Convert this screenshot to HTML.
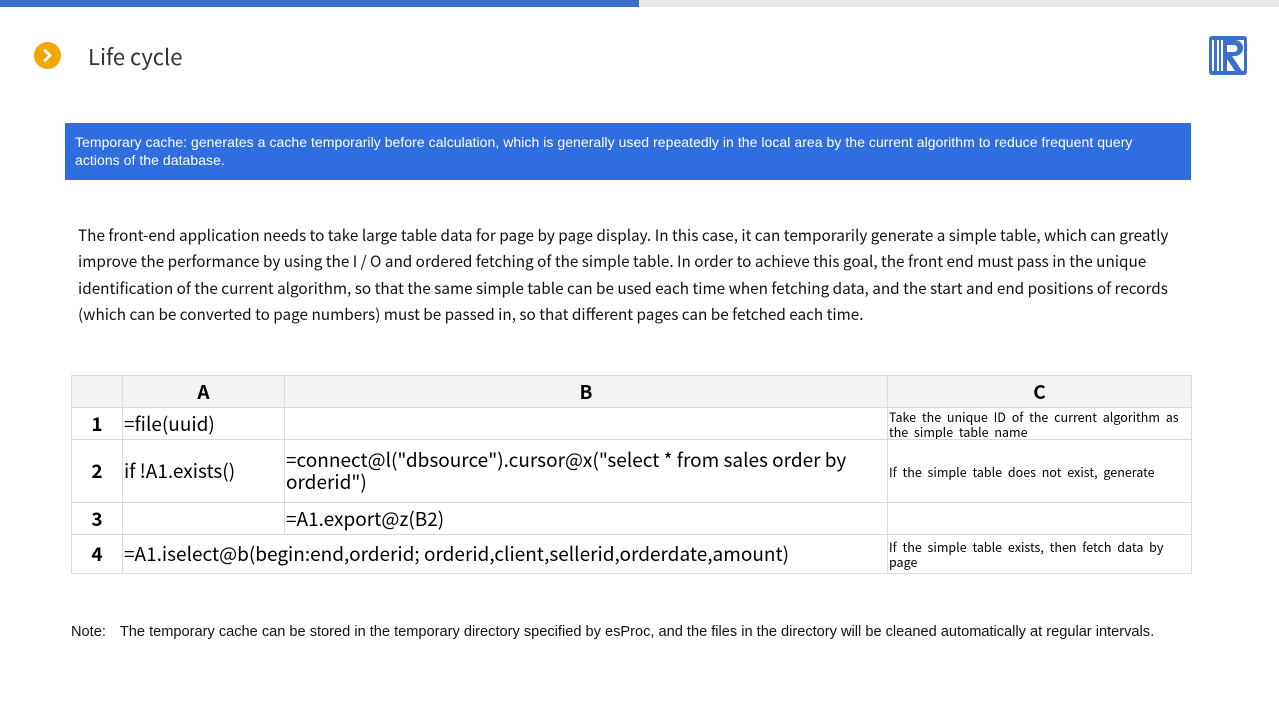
<!DOCTYPE html>
<html><head><meta charset="utf-8"><style>
*{margin:0;padding:0;box-sizing:border-box}
body{width:1279px;height:720px;background:#fff;position:relative;overflow:hidden;font-family:"Liberation Sans","Noto Sans CJK SC",sans-serif;}
.abs{position:absolute}
table{border-collapse:collapse;position:absolute;left:71px;top:375px;table-layout:fixed;width:1120px}
td{border:1px solid #d9d9d9;color:#000;font-family:"Noto Sans CJK SC","Liberation Sans",sans-serif;font-size:19px;line-height:22px;padding:0 1px;vertical-align:middle;overflow:hidden}
td.h{background:#f2f2f2;text-align:center;font-weight:bold;font-size:19px}
td.c{font-size:12.5px;line-height:15px;word-spacing:3px}
</style></head><body>
<div class="abs" style="left:0;top:0;width:639px;height:7px;background:#3b6fce"></div>
<div class="abs" style="left:639px;top:0;width:640px;height:7px;background:#e8e8e8"></div>
<div class="abs" style="left:34px;top:42px;width:27px;height:27px;border-radius:50%;background:#f0a800"></div>
<svg class="abs" style="left:34px;top:42px" width="27" height="27"><path d="M11 8.5 L16 13.5 L11 18.5" stroke="#fff" stroke-width="3" fill="none" stroke-linecap="round" stroke-linejoin="round"/></svg>
<div class="abs" style="left:88px;top:42px;font-size:22px;color:#333;font-family:'Noto Sans CJK SC','Liberation Sans',sans-serif;line-height:28px">Life cycle</div>
<svg class="abs" style="left:1208px;top:35px" width="40" height="41" viewBox="0 0 40 41">
<rect x="1" y="1" width="38" height="39" rx="3" fill="#3b6fce"/>
<rect x="4" y="5" width="32" height="31" fill="#fff"/>
<rect x="6" y="5" width="3" height="31" fill="#3b6fce"/>
<rect x="11" y="5" width="2" height="31" fill="#3b6fce"/>
<path d="M15 5 H27 A8 8 0 0 1 27 21 H24 L34 36 H27 L19 24 V36 H15 Z M19 10 V17 H26 A3.5 3.5 0 0 0 26 10 Z" fill="#3b6fce"/>
</svg>
<div class="abs" style="left:65px;top:123px;width:1126px;height:57px;background:#2f6ee0;color:#fff;font-size:14px;line-height:18px;padding:10px 10px;letter-spacing:0.05px">Temporary cache: generates a cache temporarily before calculation, which is generally used repeatedly in the local area by the current algorithm to reduce frequent query actions of the database.</div>
<div class="abs" style="left:78px;top:222px;width:1110px;font-size:15.3px;line-height:26.3px;color:#111;font-family:'Noto Sans CJK SC','Liberation Sans',sans-serif">The front-end application needs to take large table data for page by page display. In this case, it can temporarily generate a simple table, which can greatly improve the performance by using the I / O and ordered fetching of the simple table. In order to achieve this goal, the front end must pass in the unique identification of the current algorithm, so that the same simple table can be used each time when fetching data, and the start and end positions of records (which can be converted to page numbers) must be passed in, so that different pages can be fetched each time.</div>
<table>
<colgroup><col style="width:51px"><col style="width:162px"><col style="width:603px"><col style="width:304px"></colgroup>
<tr style="height:32px"><td class="h"></td><td class="h">A</td><td class="h">B</td><td class="h">C</td></tr>
<tr style="height:32px"><td class="h" style="background:#fff">1</td><td>=file(uuid)</td><td></td><td class="c">Take the unique ID of the current algorithm as the simple table name</td></tr>
<tr style="height:63px"><td class="h" style="background:#fff">2</td><td>if !A1.exists()</td><td>=connect@l("dbsource").cursor@x("select * from sales order by orderid")</td><td class="c">If the simple table does not exist, generate</td></tr>
<tr style="height:32px"><td class="h" style="background:#fff">3</td><td></td><td>=A1.export@z(B2)</td><td></td></tr>
<tr style="height:39px"><td class="h" style="background:#fff">4</td><td colspan="2">=A1.iselect@b(begin:end,orderid; orderid,client,sellerid,orderdate,amount)</td><td class="c">If the simple table exists, then fetch data by page</td></tr>
</table>
<div class="abs" style="left:71px;top:623px;font-size:14.6px;color:#111;line-height:18px">Note:<span style="display:inline-block;width:14px"></span>The temporary cache can be stored in the temporary directory specified by esProc, and the files in the directory will be cleaned automatically at regular intervals.</div>
</body></html>
